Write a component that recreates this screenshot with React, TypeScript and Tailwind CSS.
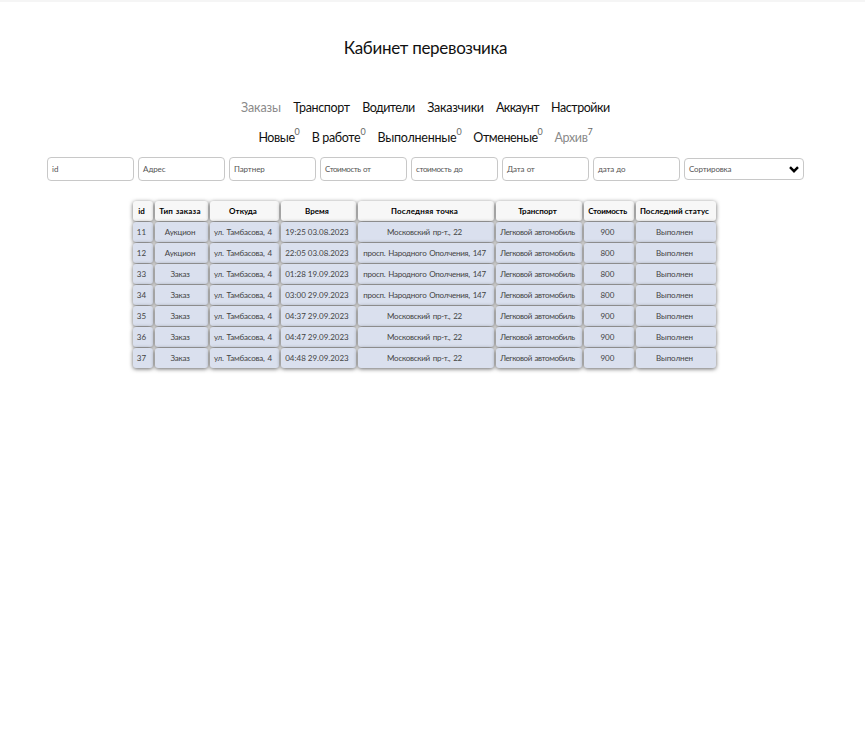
const mainNav = [
  { label: "Заказы", box: "w-[40px] text-[#8a8a8a] tracking-[-0.1px]" },
  { label: "Транспорт", box: "w-[57px] tracking-[-0.35px]" },
  { label: "Водители", box: "w-[53px] tracking-[-0.55px]" },
  { label: "Заказчики", box: "w-[57px] tracking-[-0.25px]" },
  { label: "Аккаунт", box: "w-[43px] tracking-[-0.6px]" },
  { label: "Настройки", box: "w-[59px] tracking-[-0.45px]" },
];

const subNav = [
  { label: "Новые", count: 0, box: "w-[36px] tracking-[-0.4px]" },
  { label: "В работе", count: 0, box: "w-[49px] tracking-[-0.35px]" },
  { label: "Выполненные", count: 0, box: "w-[79px] tracking-[-0.25px]" },
  { label: "Отмененые", count: 0, box: "w-[64px] tracking-[-0.4px]" },
  { label: "Архив", count: 7, box: "w-[33px] text-[#8a8a8a] tracking-[-0.35px]" },
];

const filters = [
  { label: "id", tracking: "tracking-normal" },
  { label: "Адрес", tracking: "tracking-[-0.1px]" },
  { label: "Партнер", tracking: "tracking-[-0.1px]" },
  { label: "Стоимость от", tracking: "tracking-[-0.5px] [word-spacing:1px]" },
  { label: "стоимость до", tracking: "tracking-[-0.4px] [word-spacing:1px]" },
  { label: "Дата от", tracking: "tracking-[-0.2px] [word-spacing:0.5px]" },
  { label: "дата до", tracking: "tracking-[-0.2px] [word-spacing:0.5px]" },
];

const headers = [
  { label: "id", tracking: "" },
  { label: "Тип заказа", tracking: "tracking-[0.2px] [word-spacing:0.5px]" },
  { label: "Откуда", tracking: "" },
  { label: "Время", tracking: "" },
  { label: "Последняя точка", tracking: "tracking-[0.15px] [word-spacing:0.5px]" },
  { label: "Транспорт", tracking: "" },
  { label: "Стоимость", tracking: "tracking-[-0.2px]" },
  { label: "Последний статус", tracking: "tracking-[0.05px]" },
];

const moscow = "Московский пр-т., 22";
const narod = "просп. Народного Ополчения, 147";
const from = "ул. Тамбасова, 4";
const car = "Легковой автомобиль";
const done = "Выполнен";

const rows = [
  ["11", "Аукцион", from, "19:25 03.08.2023", moscow, car, "900", done],
  ["12", "Аукцион", from, "22:05 03.08.2023", narod, car, "800", done],
  ["33", "Заказ", from, "01:28 19.09.2023", narod, car, "800", done],
  ["34", "Заказ", from, "03:00 29.09.2023", narod, car, "800", done],
  ["35", "Заказ", from, "04:37 29.09.2023", moscow, car, "900", done],
  ["36", "Заказ", from, "04:47 29.09.2023", moscow, car, "900", done],
  ["37", "Заказ", from, "04:48 29.09.2023", moscow, car, "900", done],
];

const columnTracking = [
  "",
  "tracking-[-0.2px]",
  "tracking-[-0.2px] [word-spacing:1px]",
  "",
  "tracking-[-0.25px] [word-spacing:1px]",
  "tracking-[-0.4px] [word-spacing:1px]",
  "tracking-[0.1px]",
  "tracking-[-0.1px]",
];

const cell =
  "flex h-5 items-center justify-center whitespace-nowrap rounded-[3px] pr-[3px] shadow-[0_1px_4px_rgba(0,0,0,0.6)]";

export default function App() {
  return (
    <div className="min-h-[729px] w-[865px] border-t-2 border-[#f5f5f5] bg-white font-['Lato','Open_Sans',sans-serif] text-[#111]">
      <div className="flex w-[851px] flex-col items-center">
        <h1 className="mt-8 h-7 whitespace-nowrap text-[17px] leading-7 tracking-[-0.3px]">Кабинет перевозчика</h1>
        <nav className="mt-9 flex h-5 gap-3 text-[12.5px] leading-5">
          {mainNav.map((item) => (
            <a key={item.label} className={`flex justify-center whitespace-nowrap ${item.box}`}>
              {item.label}
            </a>
          ))}
        </nav>
        <nav className="mt-2.5 flex h-5 gap-3 text-[12.5px] leading-5">
          {subNav.map((item) => (
            <a key={item.label} className="flex">
              <span className={`flex justify-center whitespace-nowrap ${item.box}`}>{item.label}</span>
              <sup className="top-0 -mt-1.5 w-[5px] text-[9px] leading-5 text-[#666]">{item.count}</sup>
            </a>
          ))}
        </nav>
        <div className="mt-[9px] flex h-[25px] w-[757px] items-start gap-1 text-[8px] text-[#555]">
          {filters.map((item) => (
            <div
              key={item.label}
              className={`flex h-6 w-[87px] items-center rounded-[4px] border border-[#c8c8c8] px-1 ${item.tracking}`}
            >
              {item.label}
            </div>
          ))}
          <div className="mt-px flex h-[22px] w-[120px] items-center justify-between rounded-[4px] border border-[#c8c8c8] px-1 tracking-[-0.15px]">
            Сортировка
            <svg width="10" height="7" viewBox="0 0 10 7" fill="none" stroke="#000" strokeWidth="2.4">
              <path d="M1 1.2 5 5.2 9 1.2" />
            </svg>
          </div>
        </div>
        <div className="mr-0.5 mt-[19px] grid grid-cols-[20px_53px_69px_75px_136px_86px_50px_80px] gap-x-[2px] gap-y-px text-[8px]">
          {headers.map((item) => (
            <div key={item.label} className={`${cell} bg-[#f7f7f7] font-bold text-black ${item.tracking}`}>
              {item.label}
            </div>
          ))}
          {rows.flatMap((row) =>
            row.map((value, i) => (
              <div key={`${row[0]}-${i}`} className={`${cell} bg-[#dae0ee] text-[#444] ${columnTracking[i]}`}>
                {value}
              </div>
            )),
          )}
        </div>
      </div>
    </div>
  );
}
